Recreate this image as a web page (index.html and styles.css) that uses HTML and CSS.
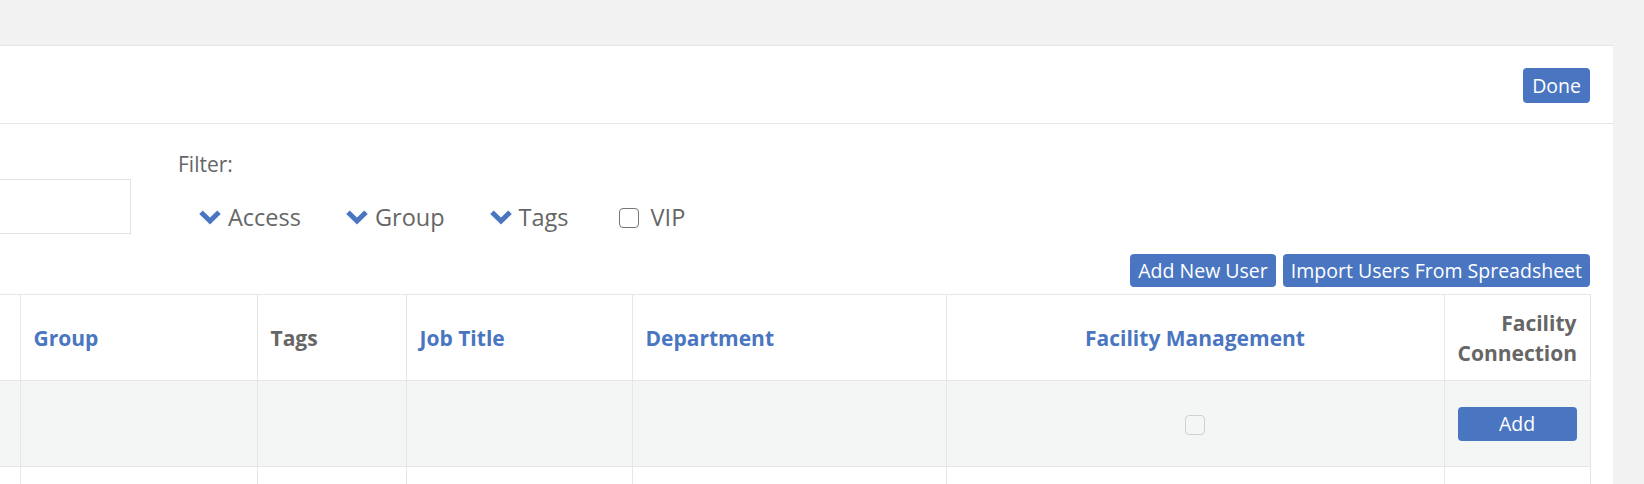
FILE: index.html
```html
<!DOCTYPE html>
<html lang="en">
<head>
<meta charset="utf-8">
<title>Users</title>
<link rel="stylesheet" href="styles.css">
</head>
<body>
<div class="topbar"></div>
<div class="page">
  <div class="panel">
    <div class="panel-head">
      <button class="btn">Done</button>
    </div>
    <div class="panel-body">
      <div class="toolbar">
        <div class="search"></div>
        <div class="filter">
          <div class="filter-label">Filter:</div>
          <div class="filter-items">
            <span class="filter-item"><svg class="chev" viewBox="0 0 22 15" width="22" height="15"><polyline points="2,2.2 11,11 20,2.2"/></svg>Access</span>
            <span class="filter-item"><svg class="chev" viewBox="0 0 22 15" width="22" height="15"><polyline points="2,2.2 11,11 20,2.2"/></svg>Group</span>
            <span class="filter-item"><svg class="chev" viewBox="0 0 22 15" width="22" height="15"><polyline points="2,2.2 11,11 20,2.2"/></svg>Tags</span>
            <span class="filter-item vip"><span class="check"></span>VIP</span>
          </div>
        </div>
      </div>
      <div class="actions">
        <button class="btn btn-sm">Add New User</button>
        <button class="btn btn-sm">Import Users From Spreadsheet</button>
      </div>
      <table class="users">
        <colgroup>
          <col class="c1"><col class="c2"><col class="c3"><col class="c4"><col class="c5"><col class="c6"><col class="c7">
        </colgroup>
        <thead>
          <tr>
            <th class="first"></th>
            <th class="link">Group</th>
            <th class="plain">Tags</th>
            <th class="link">Job Title</th>
            <th class="link">Department</th>
            <th class="link center">Facility Management</th>
            <th class="plain right">Facility<br>Connection</th>
          </tr>
        </thead>
        <tbody>
          <tr class="shade">
            <td class="first"></td>
            <td></td>
            <td></td>
            <td></td>
            <td></td>
            <td class="center"><span class="check disabled"></span></td>
            <td><button class="btn btn-block">Add</button></td>
          </tr>
          <tr>
            <td class="first"></td>
            <td></td>
            <td></td>
            <td></td>
            <td></td>
            <td></td>
            <td></td>
          </tr>
        </tbody>
      </table>
    </div>
  </div>
</div>
</body>
</html>
```

FILE: styles.css
```css
* { box-sizing: border-box; }

html, body {
  margin: 0;
  padding: 0;
  background: #f2f2f2;
  font-family: "Open Sans", "Liberation Sans", sans-serif;
  color: #666;
  overflow: hidden;
  height: 484px;
}

.topbar {
  height: 45px;
}

.page {
  padding-right: 31px;
}

.panel {
  background: #fff;
  border-top: 1px solid #e6e6e6;
  height: 439px;
  overflow: hidden;
}

.panel-head {
  display: flex;
  justify-content: flex-end;
  padding: 22px 23px 20px 0;
  border-bottom: 1px solid #e6e6e6;
}

.btn {
  font-family: "Open Sans", "Liberation Sans", sans-serif;
  font-size: 19.5px;
  color: #fff;
  background: #4a76c1;
  border: none;
  border-radius: 4px;
  height: 35px;
  padding: 0 9px;
  display: inline-flex;
  align-items: center;
  justify-content: center;
  cursor: pointer;
  line-height: 1;
}

.btn-sm {
  height: 33px;
  padding: 0 8px;
}

.btn-block {
  width: 100%;
  height: 34px;
}

.panel-body {
  padding: 0 23px 0 0;
}

.toolbar {
  display: flex;
  align-items: flex-end;
  padding-top: 25px;
}

.search {
  width: 131px;
  height: 55px;
  border: 1px solid #e2e2e2;
  border-left: none;
}

.filter {
  margin-left: 47px;
}

.filter-label {
  font-size: 21px;
  line-height: 30px;
  color: #666;
}

.filter-items {
  display: flex;
  align-items: center;
  margin-top: 22px;
  padding-left: 21px;
  font-size: 23.5px;
  line-height: 33px;
  color: #666;
}

.filter-item {
  display: inline-flex;
  align-items: center;
  margin-right: 45px;
}

.chev {
  margin-right: 7px;
  fill: none;
  stroke: #4a76c1;
  stroke-width: 5;
  stroke-linecap: butt;
  stroke-linejoin: miter;
}

.check {
  display: inline-block;
  width: 20px;
  height: 20px;
  border: 1.5px solid #767676;
  border-radius: 4px;
  background: #fff;
}

.vip {
  margin-left: 5px;
}

.vip .check {
  margin-right: 12px;
}

.check.disabled {
  border-color: #cfd0d0;
  background: #f4f5f5;
  vertical-align: middle;
}

.actions {
  display: flex;
  justify-content: flex-end;
  gap: 7px;
  margin-top: 20px;
  margin-bottom: 7px;
}

.users {
  width: 1590px;
  table-layout: fixed;
  border-collapse: collapse;
}

.c1 { width: 20px; }
.c2 { width: 237px; }
.c3 { width: 149px; }
.c4 { width: 226px; }
.c5 { width: 314px; }
.c6 { width: 498px; }
.c7 { width: 146px; }

.users th,
.users td {
  border: 1px solid #e6e6e6;
  height: 86px;
  padding: 0 13px;
  vertical-align: middle;
}

.users th {
  font-size: 21px;
  line-height: 30px;
  font-weight: 700;
  text-align: left;
}

.users .first {
  border-left: none;
  padding: 0;
}

.users th.link { color: #4a76c1; }
.users th.plain { color: #666; }

.users .center { text-align: center; }
.users .right { text-align: right; }

.users tr.shade td { background: #f4f5f5; }

.users td .btn-block { display: flex; }
```
